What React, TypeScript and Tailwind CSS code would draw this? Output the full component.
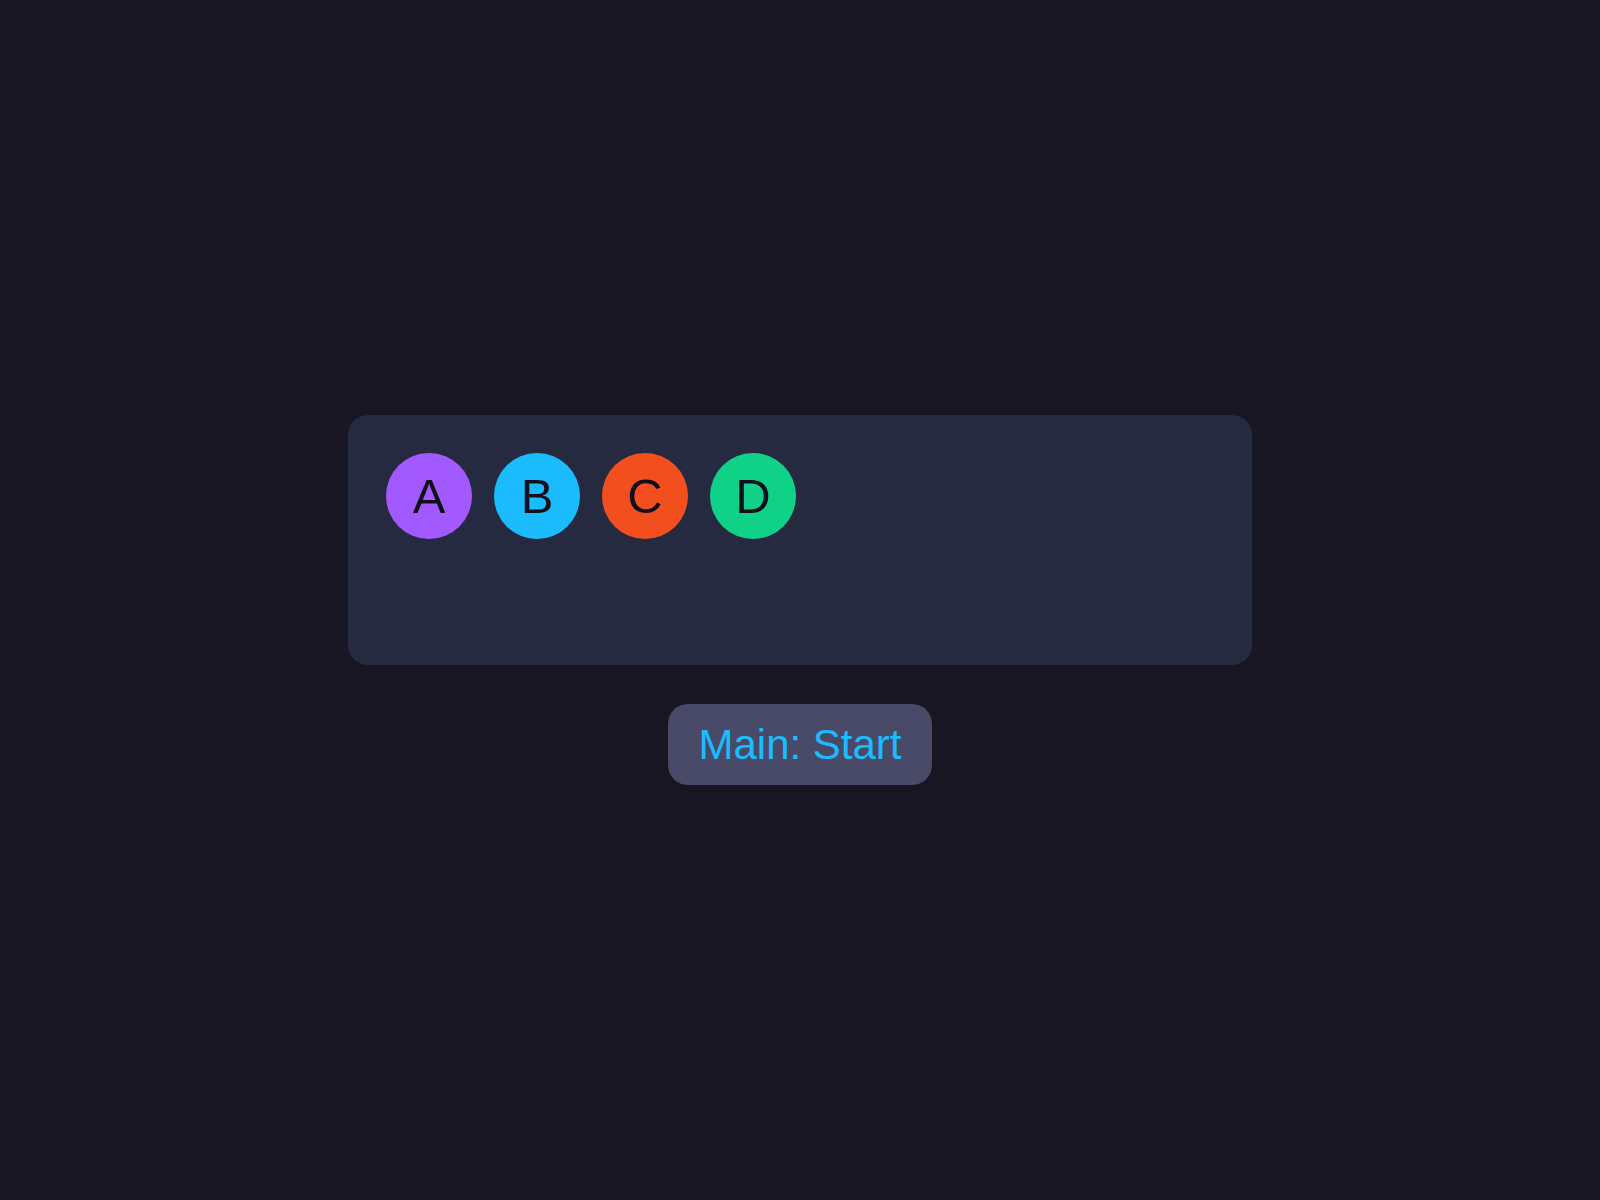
const chips = [
  { label: "A", color: "bg-[#a259ff]" },
  { label: "B", color: "bg-[#1abcfe]" },
  { label: "C", color: "bg-[#f24e1e]" },
  { label: "D", color: "bg-[#0fd187]" },
];

export default function App() {
  return (
    <main className="flex min-h-screen flex-col items-center justify-center gap-[39px] bg-[#181622] p-4 font-['Liberation_Sans',sans-serif]">
      <section className="flex min-h-[250px] w-full max-w-[904px] flex-wrap content-start gap-[22px] rounded-[20px] bg-[#262a41] p-[38px]">
        {chips.map(({ label, color }) => (
          <div
            key={label}
            className={`flex size-[86px] items-center justify-center rounded-full text-[49px] leading-[60px] text-[#11101a] ${color}`}
          >
            {label}
          </div>
        ))}
      </section>
      <button
        type="button"
        className="rounded-[20px] bg-[#494968] px-[30px] pt-[17px] pb-4 text-[42px] leading-[48px] text-[#1abcfe]"
      >
        Main: Start
      </button>
    </main>
  );
}
